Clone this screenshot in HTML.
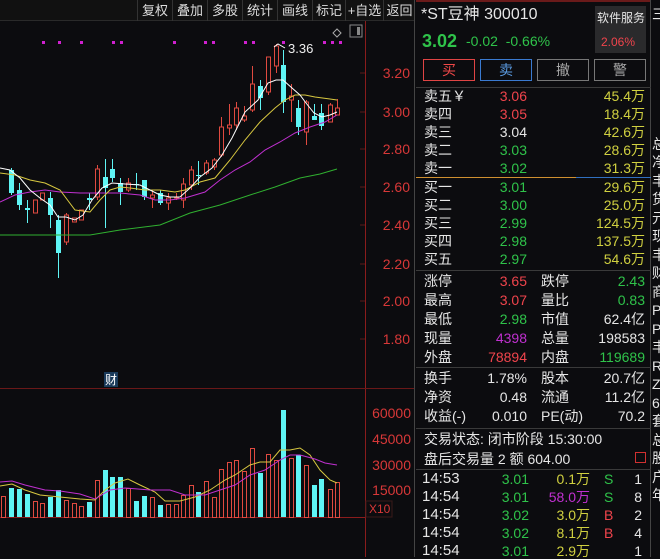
<!DOCTYPE html><html><head><meta charset="utf-8"><style>
*{margin:0;padding:0;box-sizing:border-box}
body{width:660px;height:557px;background:#0c0c0f;overflow:hidden;position:relative;font-family:"Liberation Sans","Noto Sans CJK SC",sans-serif;font-size:14px;color:#ddd}
.a{position:absolute;white-space:nowrap;line-height:16px}
.r{color:#f0444c}.g{color:#2fc34a}.y{color:#d0d040}.w{color:#e6e6e6}.m{color:#c030d0}
.tb{position:absolute;top:0;height:21px;line-height:21px;font-size:13px;color:#ddd;border-left:1px solid #333;text-align:center;white-space:nowrap;overflow:hidden}
.hl{position:absolute;height:1px;background:#3a3a3a;left:416px;width:235px}
.btn{position:absolute;top:59px;height:22px;width:52px;border:1px solid #777;text-align:center;line-height:20px;font-size:14px;color:#aaa}
</style></head><body>
<div style="position:absolute;left:0;top:0;width:415px;height:21px;background:#111;border-bottom:1px solid #2a2a2a"></div>
<div class="tb" style="left:137px;width:35px">复权</div>
<div class="tb" style="left:172px;width:35px">叠加</div>
<div class="tb" style="left:207px;width:35px">多股</div>
<div class="tb" style="left:242px;width:35px">统计</div>
<div class="tb" style="left:277px;width:35px">画线</div>
<div class="tb" style="left:312px;width:33px">标记</div>
<div class="tb" style="left:345px;width:38px">+自选</div>
<div class="tb" style="left:383px;width:32px">返回</div>
<svg id="c" width="415" height="557" style="position:absolute;left:0;top:0"></svg>
<div style="position:absolute;left:414px;top:0;width:1px;height:557px;background:#444"></div>
<div style="position:absolute;left:650px;top:0;width:1px;height:557px;background:#444"></div>
<div style="position:absolute;left:416px;top:0;width:234px;height:2px;background:#6a1a1a"></div>
<div class="a w" style="left:421px;top:7px;font-size:16px">*ST豆神 300010</div>
<div style="position:absolute;left:595px;top:6px;width:51px;height:47px;background:#2a2a2c"></div>
<div class="a w" style="left:597px;top:10px;font-size:12px">软件服务</div>
<div class="a r" style="left:601px;top:34px;font-size:12px">2.06%</div>
<div class="a g" style="left:422px;top:32px;font-size:18px;font-weight:bold;line-height:18px">3.02</div>
<div class="a g" style="left:466px;top:33px;font-size:14px">-0.02&nbsp;&nbsp;-0.66%</div>
<div class="btn" style="left:423px;border-color:#e04444;color:#f04848">买</div>
<div class="btn" style="left:480px;border-color:#3a7ad0;color:#5a9ae0">卖</div>
<div class="btn" style="left:537px">撤</div>
<div class="btn" style="left:594px">警</div>
<div class="hl" style="top:87px"></div>
<div style="position:absolute;left:416px;top:177px;width:160px;height:1px;background:#d09030"></div>
<div style="position:absolute;left:576px;top:177px;width:75px;height:1px;background:#3070c0"></div>
<div class="hl" style="top:270px"></div>
<div class="hl" style="top:367px"></div><div class="hl" style="top:428px"></div><div class="hl" style="top:469px"></div>
<div id="p"></div>
<script>
var P=document.getElementById('p'),h='';
function t(x,y,s,c,al,fs){h+='<div class="a '+(c||'w')+'" style="'+(al?'right:'+(660-x)+'px':'left:'+x+'px')+';top:'+(y-8)+'px'+(fs?';font-size:'+fs+'px':'')+'">'+s+'</div>';}
var ob=[['卖五￥','3.06','r','45.4万'],['卖四','3.05','r','18.4万'],['卖三','3.04','w','42.6万'],['卖二','3.03','g','28.6万'],['卖一','3.02','g','31.3万'],['买一','3.01','g','29.6万'],['买二','3.00','g','25.0万'],['买三','2.99','g','124.5万'],['买四','2.98','g','137.5万'],['买五','2.97','g','54.6万']];
ob.forEach(function(o,i){var y=i<5?96+i*18:187+(i-5)*18;t(424,y,o[0],'w');t(527,y,o[1],o[2],1);t(645,y,o[3],'y',1);});
var st=[['涨停','3.65','r','跌停','2.43','g'],['最高','3.07','r','量比','0.83','g'],['最低','2.98','g','市值','62.4亿','w'],['现量','4398','m','总量','198583','w'],['外盘','78894','r','内盘','119689','g']];
st.forEach(function(o,i){var y=281+i*19;t(424,y,o[0]);t(527,y,o[1],o[2],1);t(541,y,o[3]);t(645,y,o[4],o[5],1);});
var s2=[['换手','1.78%','股本','20.7亿'],['净资','0.48','流通','11.2亿'],['收益(-)','0.010','PE(动)','70.2']];
s2.forEach(function(o,i){var y=378+i*19;t(424,y,o[0]);t(527,y,o[1],'w',1);t(541,y,o[2]);t(645,y,o[3],'w',1);});
t(424,439,'交易状态: 闭市阶段 15:30:00');t(424,459,'盘后交易量 2 额 604.00');
h+='<div style="position:absolute;left:635px;top:452px;width:11px;height:11px;border:1px solid #d03030"></div>';
var tk=[['14:53','3.01','0.1万','y','S','g','1'],['14:54','3.01','58.0万','m','S','g','8'],['14:54','3.02','3.0万','y','B','r','2'],['14:54','3.02','8.1万','y','B','r','4'],['14:54','3.01','2.9万','y','','g','1']];
tk.forEach(function(o,i){var y=479+i*18;t(422,y,o[0],'w',0,15);t(529,y,o[1],'g',1);t(590,y,o[2],o[3],1);t(604,y,o[4],o[5]);t(642,y,o[6],'w',1);});
var ed=['三','','','','','','','总','净','丰','货','元','现','丰','财','商','P','P','丰','R','Z','6','套','总','股','户','年'];
ed.forEach(function(c,i){if(c)t(652,14+i*18.5,c,'w');});
P.innerHTML=h;
var S='';
function L(x1,y1,x2,y2,c){S+='<line x1="'+x1+'" y1="'+y1+'" x2="'+x2+'" y2="'+y2+'" stroke="'+c+'" stroke-width="1"/>';}
L(365.5,21,365.5,557,'#8a1c1c');L(0,388.5,415,388.5,'#6a1818');L(0,517.5,365,517.5,'#8a1c1c');
[[73,'3.20'],[112,'3.00'],[149,'2.80'],[187,'2.60'],[225,'2.40'],[264,'2.20'],[301,'2.00'],[339,'1.80']].forEach(function(a){L(360,a[0],365,a[0],'#5a1a1a');S+='<text x="410" y="'+(a[0]+5)+'" fill="#d83838" font-size="14" text-anchor="end" font-family="Liberation Sans">'+a[1]+'</text>';});
[[413,'60000'],[439,'45000'],[465,'30000'],[490,'15000']].forEach(function(a){S+='<text x="411" y="'+(a[0]+5)+'" fill="#d83838" font-size="14" text-anchor="end" font-family="Liberation Sans">'+a[1]+'</text>';});
S+='<rect x="366" y="501" width="26" height="16" fill="none" stroke="#3a1a1a"/><text x="369" y="513" fill="#d83838" font-size="12" font-family="Liberation Sans">X10</text>';
[[42,1],[58,1],[80,1],[112,2],[173,1],[204,2],[244,2],[282,1],[323,3]].forEach(function(a){for(var k=0;k<a[1];k++)S+='<rect x="'+(a[0]+k*8)+'" y="41" width="3" height="3" fill="#d020d0"/>';});
S+='<path d="M333 33 L337 29 L341 33 L337 37 Z" fill="none" stroke="#aaa"/><rect x="350" y="25" width="12" height="12" fill="none" stroke="#888"/><rect x="357" y="27" width="3" height="8" fill="#888"/>';
var cd=[[11,170,193,168,195,0],[19,190,205,183,210,0],[27,208,210,200,223,0],[35,213,200,200,213,1],[42,200,193,193,200,1],[50,198,215,192,228,0],[58,220,253,215,278,0],[66,242,215,213,245,1],[74,222,218,218,222,1],[81,220,210,210,220,1],[89,198,200,193,210,0],[97,197,169,165,200,1],[105,177,188,159,228,0],[112,169,178,159,182,0],[120,183,192,178,205,0],[128,190,183,178,192,1],[136,184,185,173,190,0],[144,180,197,180,200,0],[152,198,195,190,208,1],[160,193,203,190,205,0],[168,203,198,193,210,1],[176,197,198,193,200,1],[183,200,184,178,208,1],[191,185,170,166,190,1],[198,175,176,161,185,0],[206,173,163,160,175,1],[214,167,160,158,170,1],[221,155,127,117,157,1],[229,128,125,104,135,1],[236,125,108,102,130,1],[244,120,116,106,122,1],[252,110,84,66,112,1],[260,86,98,80,110,0],[268,92,57,57,95,1],[276,66,46,44,73,1],[283,65,102,50,113,0],[291,100,96,84,122,1],[298,108,127,100,135,0],[306,132,102,100,145,1],[314,116,120,104,120,0],[321,113,126,104,130,0],[330,122,105,103,122,1],[337,115,108,99,115,1]];
var vt=[488,489,494,501,503,497,490,500,503,506,502,480,470,477,477,488,501,496,497,505,504,504,495,485,492,481,497,469,462,460,471,448,473,454,460,410,458,455,465,485,479,489,482];
S+='<rect x="1.5" y="496.5" width="4" height="21" fill="none" stroke="#e04a40"/>';
cd.forEach(function(c,i){var col=c[5]?'#e04a40':'#5ff5f5',top=Math.min(c[1],c[2]),hh=Math.max(1,Math.abs(c[1]-c[2]));L(c[0]+.5,c[3],c[0]+.5,c[4],col);
if(c[5])S+='<rect x="'+(c[0]-1.5)+'" y="'+top+'" width="4" height="'+hh+'" fill="#0c0c0f" stroke="'+col+'"/>';else S+='<rect x="'+(c[0]-2)+'" y="'+top+'" width="5" height="'+hh+'" fill="'+col+'"/>';
var v=vt[i];if(c[5])S+='<rect x="'+(c[0]-1.5)+'" y="'+v+'.5" width="4" height="'+(517-v)+'" fill="none" stroke="'+col+'"/>';else S+='<rect x="'+(c[0]-2)+'" y="'+v+'" width="5" height="'+(517-v)+'" fill="'+col+'"/>';});
function PL(p,c){S+='<polyline points="'+p+'" fill="none" stroke="'+c+'" stroke-width="1"/>';}
PL('0,235 30,235 60,235 90,235 120,230 160,225 190,213 220,205 250,195 275,187 300,178 320,174 337,169','#30b030');
PL('0,202 15,195 30,192 45,190 60,192 80,193 100,193 120,193 140,195 155,200 170,200 185,198 205,192 220,180 235,170 250,162 265,150 280,142 295,133 310,127 325,122 337,115','#c030d0');
PL('0,173 15,175 30,180 45,183 60,190 75,210 90,212 100,200 110,190 120,187 130,188 145,190 160,190 175,192 185,190 200,182 215,178 230,160 245,140 260,122 275,108 285,100 295,95 305,95 315,97 330,99 337,100','#d8c840');
PL('0,168 10,170 20,178 30,190 40,198 50,205 58,217 66,217 75,220 83,215 92,200 102,188 112,183 125,184 140,185 150,190 160,195 170,197 180,197 190,188 200,177 212,168 222,155 232,138 245,112 258,100 268,83 276,80 283,80 292,88 300,95 306,103 314,113 322,117 330,115 337,112','#ffffff');
PL('274,47 278,44 285,48','#fff');S+='<text x="288" y="53" fill="#eee" font-size="13" font-family="Liberation Sans">3.36</text>';
PL('0,486 12,484 25,490 40,495 60,497 80,499 95,500 105,490 115,483 128,479 140,485 155,492 165,501 180,501 195,497 210,490 225,480 235,475 250,465 260,462 270,462 280,450 290,450 300,448 310,455 320,470 330,480 337,483','#d8c840');
PL('0,482 12,481 25,485 45,490 60,491 80,494 95,499 110,490 125,488 150,490 170,490 185,495 205,495 220,490 235,485 250,475 265,470 280,460 290,455 300,455 315,459 325,463 337,465','#c030d0');
S+='<rect x="104" y="372" width="14" height="15" fill="#1a3a5a"/><text x="105" y="384" fill="#fff" font-size="12" font-family="Noto Sans CJK SC">财</text>';
document.getElementById('c').innerHTML=S;
</script>
</body></html>
